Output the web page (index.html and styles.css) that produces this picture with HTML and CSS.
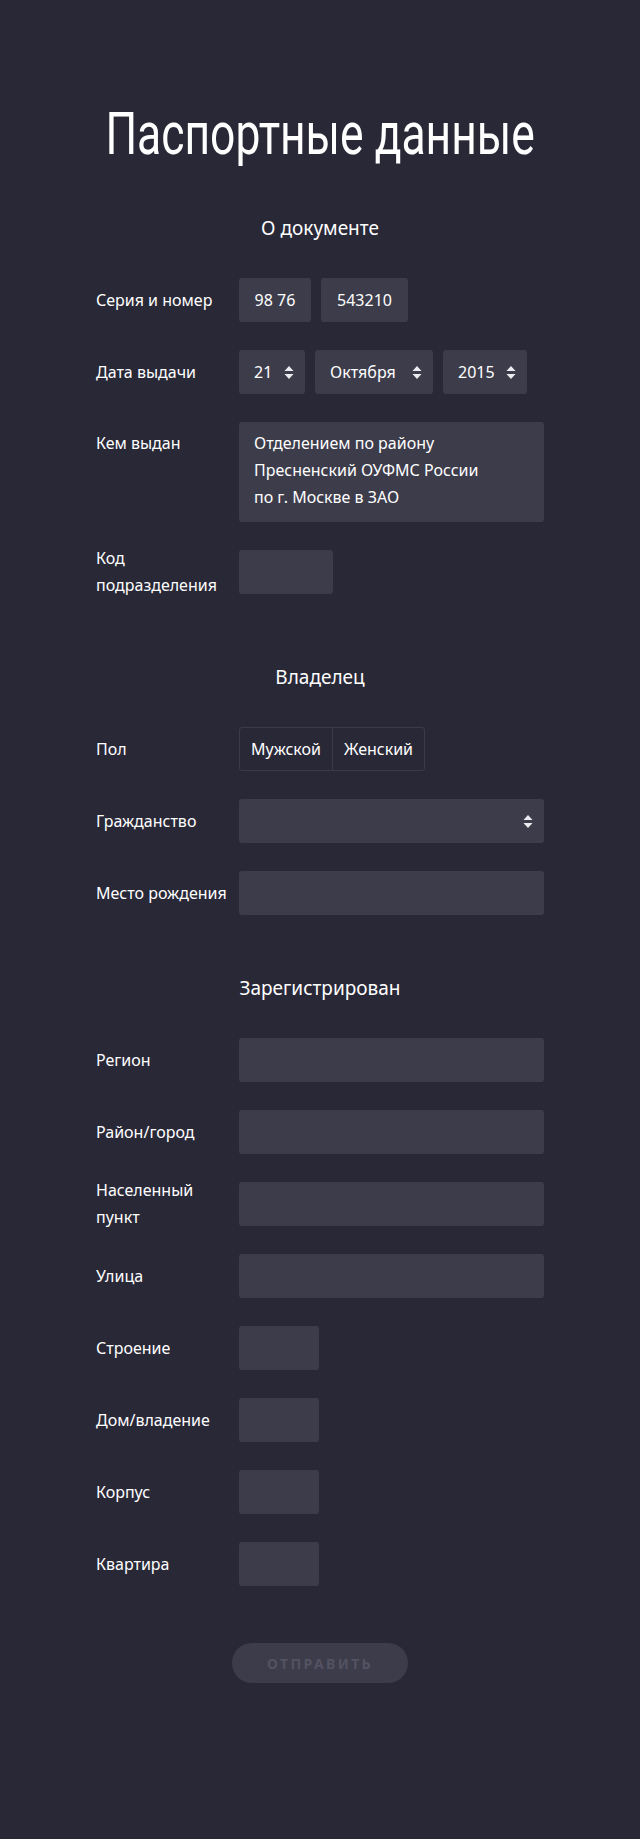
FILE: index.html
```html
<!DOCTYPE html>
<html lang="ru">
<head>
<meta charset="utf-8">
<title>Паспортные данные</title>
<link rel="stylesheet" href="styles.css">
</head>
<body>
<main class="page">
  <h1 class="title"><span class="title-text">Паспортные данные</span></h1>

  <section class="section">
    <h2 class="section-title">О документе</h2>
    <div class="rows">
      <div class="row">
        <div class="label">Серия и номер</div>
        <div class="fields">
          <div class="input center w-series">98 76</div>
          <div class="input center w-number">543210</div>
        </div>
      </div>
      <div class="row">
        <div class="label">Дата выдачи</div>
        <div class="fields">
          <div class="input select w-day"><span>21</span><svg class="arrows" viewBox="0 0 10 15"><path d="M0.5 6 L5 1 L9.5 6 Z M0.5 9 L5 14 L9.5 9 Z"/></svg></div>
          <div class="input select w-month"><span>Октября</span><svg class="arrows" viewBox="0 0 10 15"><path d="M0.5 6 L5 1 L9.5 6 Z M0.5 9 L5 14 L9.5 9 Z"/></svg></div>
          <div class="input select w-year"><span>2015</span><svg class="arrows" viewBox="0 0 10 15"><path d="M0.5 6 L5 1 L9.5 6 Z M0.5 9 L5 14 L9.5 9 Z"/></svg></div>
        </div>
      </div>
      <div class="row row-top">
        <div class="label">Кем выдан</div>
        <div class="fields">
          <div class="textarea">Отделением по району<br>Пресненский ОУФМС России<br>по г. Москве в ЗАО</div>
        </div>
      </div>
      <div class="row">
        <div class="label">Код<br>подразделения</div>
        <div class="fields">
          <div class="input w-code"></div>
        </div>
      </div>
    </div>
  </section>

  <section class="section">
    <h2 class="section-title">Владелец</h2>
    <div class="rows">
      <div class="row">
        <div class="label">Пол</div>
        <div class="fields">
          <div class="segmented">
            <div class="seg">Мужской</div>
            <div class="seg">Женский</div>
          </div>
        </div>
      </div>
      <div class="row">
        <div class="label">Гражданство</div>
        <div class="fields">
          <div class="input select w-full"><span></span><svg class="arrows" viewBox="0 0 10 15"><path d="M0.5 6 L5 1 L9.5 6 Z M0.5 9 L5 14 L9.5 9 Z"/></svg></div>
        </div>
      </div>
      <div class="row">
        <div class="label">Место рождения</div>
        <div class="fields">
          <div class="input w-full"></div>
        </div>
      </div>
    </div>
  </section>

  <section class="section section-last">
    <h2 class="section-title">Зарегистрирован</h2>
    <div class="rows">
      <div class="row">
        <div class="label">Регион</div>
        <div class="fields"><div class="input w-full"></div></div>
      </div>
      <div class="row">
        <div class="label">Район/город</div>
        <div class="fields"><div class="input w-full"></div></div>
      </div>
      <div class="row">
        <div class="label">Населенный<br>пункт</div>
        <div class="fields"><div class="input w-full"></div></div>
      </div>
      <div class="row">
        <div class="label">Улица</div>
        <div class="fields"><div class="input w-full"></div></div>
      </div>
      <div class="row">
        <div class="label">Строение</div>
        <div class="fields"><div class="input w-small"></div></div>
      </div>
      <div class="row">
        <div class="label">Дом/владение</div>
        <div class="fields"><div class="input w-small"></div></div>
      </div>
      <div class="row">
        <div class="label">Корпус</div>
        <div class="fields"><div class="input w-small"></div></div>
      </div>
      <div class="row">
        <div class="label">Квартира</div>
        <div class="fields"><div class="input w-small"></div></div>
      </div>
    </div>
  </section>

  <div class="actions">
    <button class="submit" type="button">Отправить</button>
  </div>
</main>
</body>
</html>
```

FILE: styles.css
```css
html, body {
  margin: 0;
  padding: 0;
  background: #292837;
}

body {
  font-family: "Noto Sans", "Open Sans", sans-serif;
  color: #ffffff;
  min-height: 1839px;
}

.page {
  width: 448px;
  margin: 0 auto;
  padding: 98px 0 120px;
}

.title {
  margin: 0;
  display: flex;
  justify-content: center;
  font-family: "Roboto", "Noto Sans", sans-serif;
  font-weight: 400;
  font-size: 60px;
  line-height: 72px;
  color: #ffffff;
}

.title-text {
  white-space: nowrap;
  transform: scaleX(0.74);
}

.section {
  margin-top: 45px;
}

.section + .section {
  margin-top: 70px;
}

.section + .section-last {
  margin-top: 60px;
}

.section-title {
  margin: 0 0 37px;
  text-align: center;
  font-weight: 400;
  font-size: 19px;
  line-height: 26px;
}

.rows {
  display: flex;
  flex-direction: column;
  gap: 28px;
}

.row {
  display: flex;
  align-items: center;
}

.row-top {
  align-items: flex-start;
}

.row-top .label {
  margin-top: 8px;
}

.label {
  width: 143px;
  flex: none;
  margin: -5px 0;
  font-size: 16px;
  line-height: 27px;
  white-space: nowrap;
}

.fields {
  display: flex;
  gap: 10px;
  flex: 1;
}

.input {
  box-sizing: border-box;
  height: 44px;
  background: #3d3c4b;
  border-radius: 3px;
  padding: 0 15px;
  font-size: 16px;
  line-height: 44px;
  white-space: nowrap;
  display: flex;
  align-items: center;
}

.center {
  justify-content: center;
  padding: 0;
}

.w-series { width: 72px; }
.w-number { width: 87px; }
.w-day { width: 66px; }
.w-month { width: 118px; }
.w-year { width: 84px; }
.w-code { width: 94px; }
.w-small { width: 80px; }
.w-full { width: 305px; }

.select {
  justify-content: space-between;
  padding-right: 11px;
}

.arrows {
  width: 10px;
  height: 15px;
  fill: #ececf0;
  flex: none;
}

.textarea {
  box-sizing: border-box;
  width: 305px;
  height: 100px;
  background: #3d3c4b;
  border-radius: 3px;
  padding: 8px 15px;
  font-size: 16px;
  line-height: 27px;
}

.segmented {
  display: flex;
  height: 44px;
  box-sizing: border-box;
  border: 1px solid #3b3a4a;
  border-radius: 3px;
}

.seg {
  padding: 0 11px;
  font-size: 16px;
  line-height: 42px;
}

.seg + .seg {
  border-left: 1px solid #3b3a4a;
}

.actions {
  display: flex;
  justify-content: center;
  margin-top: 57px;
}

.submit {
  width: 176px;
  height: 40px;
  border: 0;
  border-radius: 20px;
  background: #3d3c4b;
  color: #535262;
  font-family: "Noto Sans", "Open Sans", sans-serif;
  font-weight: 700;
  font-size: 14px;
  letter-spacing: 2.4px;
  text-transform: uppercase;
  padding: 0;
}
```
